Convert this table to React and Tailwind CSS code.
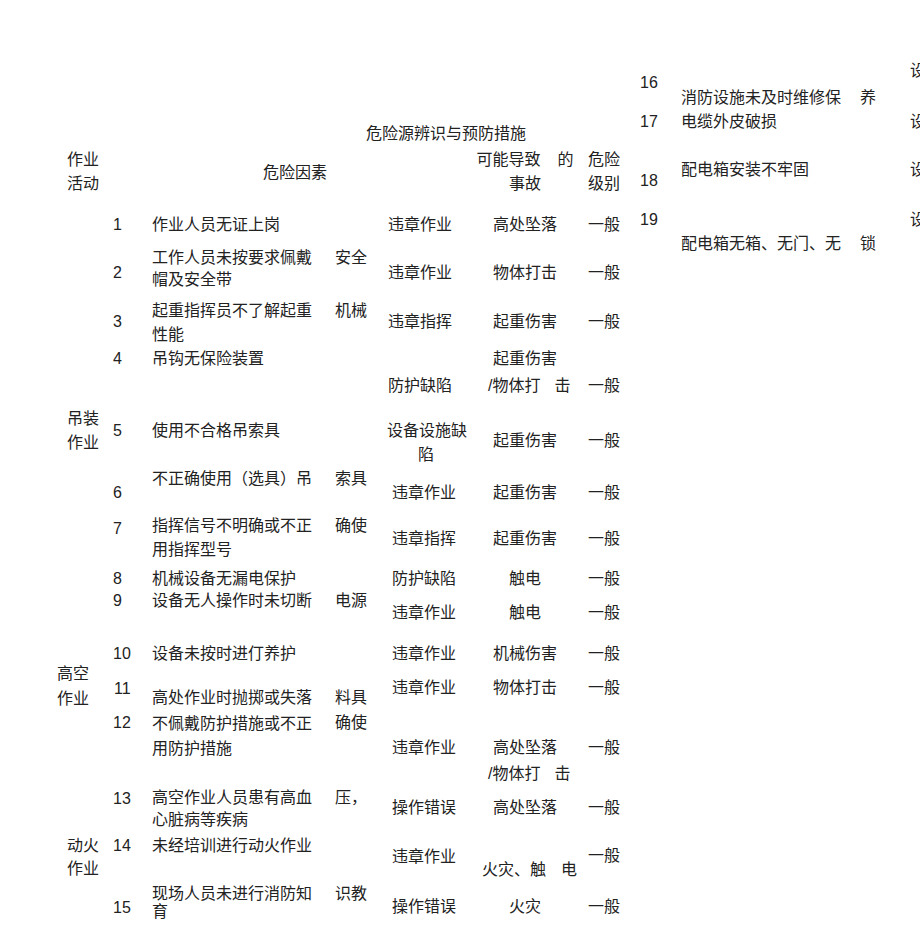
import React from "react";

const Sp = ({ w }) => <span className={`inline-block ${w}`} />;

const App = () => {
  return (
    <div className="w-[920px] h-[949px] overflow-hidden bg-white text-[#222] text-[16px] leading-[24px] font-['Liberation_Sans','Noto_Sans_CJK_SC',sans-serif] flex">
      {/* left page: main table */}
      <div className="w-[640px] shrink-0 pt-[122px]">
        <div className="h-[26px] pl-[366px] whitespace-nowrap">危险源辨识与预防措施</div>

        {/* header */}
        <div className="flex h-[65px]">
          <div className="w-[110px] shrink-0 pl-[67px]"><div>作业</div><div>活动</div></div>
          <div className="w-[42px] shrink-0" />
          <div className="w-[313px] shrink-0 pl-[111px] pt-[13px]">危险因素</div>
          <div className="w-[120px] shrink-0 text-center">
            <div className="whitespace-nowrap">可能导致<Sp w="w-[17px]" />的</div>
            <div>事故</div>
          </div>
          <div className="w-[38px] shrink-0 text-center"><div>危险</div><div>级别</div></div>
        </div>

        {/* 1 */}
        <div className="flex h-[34px]">
          <div className="w-[110px] shrink-0" />
          <div className="w-[42px] shrink-0 pl-[3px]">1</div>
          <div className="w-[183px] shrink-0">作业人员无证上岗</div>
          <div className="w-[40px] shrink-0" />
          <div className="w-[90px] shrink-0 text-center">违章作业</div>
          <div className="w-[120px] shrink-0 text-center">高处坠落</div>
          <div className="w-[38px] shrink-0 text-center">一般</div>
        </div>

        {/* 2 */}
        <div className="flex h-[52px]">
          <div className="w-[110px] shrink-0" />
          <div className="w-[42px] shrink-0 pl-[3px] pt-[14px]">2</div>
          <div className="w-[183px] shrink-0 leading-[22px]"><div>工作人员未按要求佩戴</div><div>帽及安全带</div></div>
          <div className="w-[40px] shrink-0 leading-[22px]">安全</div>
          <div className="w-[90px] shrink-0 text-center pt-[14px]">违章作业</div>
          <div className="w-[120px] shrink-0 text-center pt-[14px]">物体打击</div>
          <div className="w-[38px] shrink-0 text-center pt-[14px]">一般</div>
        </div>

        {/* 3 */}
        <div className="flex h-[48px]">
          <div className="w-[110px] shrink-0" />
          <div className="w-[42px] shrink-0 pl-[3px] pt-[11px]">3</div>
          <div className="w-[183px] shrink-0"><div>起重指挥员不了解起重</div><div>性能</div></div>
          <div className="w-[40px] shrink-0">机械</div>
          <div className="w-[90px] shrink-0 text-center pt-[11px]">违章指挥</div>
          <div className="w-[120px] shrink-0 text-center pt-[11px]">起重伤害</div>
          <div className="w-[38px] shrink-0 text-center pt-[11px]">一般</div>
        </div>

        {/* 4 */}
        <div className="flex h-[60px]">
          <div className="w-[110px] shrink-0" />
          <div className="w-[42px] shrink-0 pl-[3px]">4</div>
          <div className="w-[183px] shrink-0">吊钩无保险装置</div>
          <div className="w-[40px] shrink-0" />
          <div className="w-[90px] shrink-0 text-center pt-[27px]">防护缺陷</div>
          <div className="w-[120px] shrink-0">
            <div className="text-center">起重伤害</div>
            <div className="mt-[3px] pl-[23px] whitespace-nowrap">/物体打<Sp w="w-[14px]" />击</div>
          </div>
          <div className="w-[38px] shrink-0 text-center pt-[27px]">一般</div>
        </div>

        {/* 5 */}
        <div className="flex h-[60px]">
          <div className="w-[110px] shrink-0 pl-[67px]"><div>吊装</div><div>作业</div></div>
          <div className="w-[42px] shrink-0 pl-[3px] pt-[12px]">5</div>
          <div className="w-[183px] shrink-0 pt-[12px]">使用不合格吊索具</div>
          <div className="w-[40px] shrink-0" />
          <div className="w-[90px] shrink-0 text-center pt-[12px] pl-[12px] whitespace-nowrap"><div>设备设施缺</div><div>陷</div></div>
          <div className="w-[120px] shrink-0 text-center pt-[22px]">起重伤害</div>
          <div className="w-[38px] shrink-0 text-center pt-[22px]">一般</div>
        </div>

        {/* 6 */}
        <div className="flex h-[47px]">
          <div className="w-[110px] shrink-0" />
          <div className="w-[42px] shrink-0 pl-[3px] pt-[14px]">6</div>
          <div className="w-[183px] shrink-0 whitespace-nowrap">不正确使用（选具）吊</div>
          <div className="w-[40px] shrink-0">索具</div>
          <div className="w-[90px] shrink-0 text-center pt-[14px] pl-[8px]">违章作业</div>
          <div className="w-[120px] shrink-0 text-center pt-[14px]">起重伤害</div>
          <div className="w-[38px] shrink-0 text-center pt-[14px]">一般</div>
        </div>

        {/* 7 */}
        <div className="flex h-[53px]">
          <div className="w-[110px] shrink-0" />
          <div className="w-[42px] shrink-0 pl-[3px] pt-[3px]">7</div>
          <div className="w-[183px] shrink-0"><div>指挥信号不明确或不正</div><div>用指挥型号</div></div>
          <div className="w-[40px] shrink-0">确使</div>
          <div className="w-[90px] shrink-0 text-center pt-[13px] pl-[8px]">违章指挥</div>
          <div className="w-[120px] shrink-0 text-center pt-[13px]">起重伤害</div>
          <div className="w-[38px] shrink-0 text-center pt-[13px]">一般</div>
        </div>

        {/* 8 */}
        <div className="flex h-[22px]">
          <div className="w-[110px] shrink-0" />
          <div className="w-[42px] shrink-0 pl-[3px]">8</div>
          <div className="w-[183px] shrink-0">机械设备无漏电保护</div>
          <div className="w-[40px] shrink-0" />
          <div className="w-[90px] shrink-0 text-center pl-[8px]">防护缺陷</div>
          <div className="w-[120px] shrink-0 text-center">触电</div>
          <div className="w-[38px] shrink-0 text-center">一般</div>
        </div>

        {/* 9 */}
        <div className="flex h-[53px]">
          <div className="w-[110px] shrink-0" />
          <div className="w-[42px] shrink-0 pl-[3px]">9</div>
          <div className="w-[183px] shrink-0">设备无人操作时未切断</div>
          <div className="w-[40px] shrink-0">电源</div>
          <div className="w-[90px] shrink-0 text-center pt-[12px] pl-[8px]">违章作业</div>
          <div className="w-[120px] shrink-0 text-center pt-[12px]">触电</div>
          <div className="w-[38px] shrink-0 text-center pt-[12px]">一般</div>
        </div>

        {/* 10 */}
        <div className="flex h-[34px]">
          <div className="w-[110px] shrink-0 pl-[57px] pt-[19px] leading-[25px]"><div>高空</div><div>作业</div></div>
          <div className="w-[42px] shrink-0 pl-[3px]">10</div>
          <div className="w-[183px] shrink-0">设备未按时进仃养护</div>
          <div className="w-[40px] shrink-0" />
          <div className="w-[90px] shrink-0 text-center pl-[8px]">违章作业</div>
          <div className="w-[120px] shrink-0 text-center">机械伤害</div>
          <div className="w-[38px] shrink-0 text-center">一般</div>
        </div>

        {/* 11 */}
        <div className="flex h-[35px]">
          <div className="w-[110px] shrink-0" />
          <div className="w-[42px] shrink-0 pl-[4px] pt-[1px]">11</div>
          <div className="w-[183px] shrink-0 pt-[10px]">高处作业时抛掷或失落</div>
          <div className="w-[40px] shrink-0 pt-[10px]">料具</div>
          <div className="w-[90px] shrink-0 text-center pl-[8px]">违章作业</div>
          <div className="w-[120px] shrink-0 text-center">物体打击</div>
          <div className="w-[38px] shrink-0 text-center">一般</div>
        </div>

        {/* 12 */}
        <div className="flex h-[76px]">
          <div className="w-[110px] shrink-0" />
          <div className="w-[42px] shrink-0 pl-[3px]">12</div>
          <div className="w-[183px] shrink-0 leading-[25px]"><div>不佩戴防护措施或不正</div><div>用防护措施</div></div>
          <div className="w-[40px] shrink-0">确使</div>
          <div className="w-[90px] shrink-0 text-center pt-[25px] pl-[8px]">违章作业</div>
          <div className="w-[120px] shrink-0 pt-[25px]">
            <div className="text-center">高处坠落</div>
            <div className="mt-[2px] pl-[23px] whitespace-nowrap">/物体打<Sp w="w-[14px]" />击</div>
          </div>
          <div className="w-[38px] shrink-0 text-center pt-[25px]">一般</div>
        </div>

        {/* 13 */}
        <div className="flex h-[47px]">
          <div className="w-[110px] shrink-0" />
          <div className="w-[42px] shrink-0 pl-[3px]">13</div>
          <div className="w-[183px] shrink-0 leading-[22px]"><div>高空作业人员患有高血</div><div>心脏病等疾病</div></div>
          <div className="w-[40px] shrink-0 leading-[22px]">压，</div>
          <div className="w-[90px] shrink-0 text-center pt-[9px] pl-[8px]">操作错误</div>
          <div className="w-[120px] shrink-0 text-center pt-[9px]">高处坠落</div>
          <div className="w-[38px] shrink-0 text-center pt-[9px]">一般</div>
        </div>

        {/* 14 */}
        <div className="flex h-[48px]">
          <div className="w-[110px] shrink-0 pl-[67px] leading-[23px]"><div>动火</div><div>作业</div></div>
          <div className="w-[42px] shrink-0 pl-[3px]">14</div>
          <div className="w-[183px] shrink-0">未经培训进行动火作业</div>
          <div className="w-[40px] shrink-0" />
          <div className="w-[90px] shrink-0 text-center pt-[11px] pl-[8px]">违章作业</div>
          <div className="w-[120px] shrink-0 pt-[24px] pl-[17px] whitespace-nowrap">火灾、触<Sp w="w-[15px]" />电</div>
          <div className="w-[38px] shrink-0 text-center pt-[10px]">一般</div>
        </div>

        {/* 15 */}
        <div className="flex h-[48px]">
          <div className="w-[110px] shrink-0" />
          <div className="w-[42px] shrink-0 pl-[3px] pt-[14px]">15</div>
          <div className="w-[183px] shrink-0"><div>现场人员未进行消防知</div><div className="leading-[12px]">育</div></div>
          <div className="w-[40px] shrink-0">识教</div>
          <div className="w-[90px] shrink-0 text-center pt-[13px] pl-[8px]">操作错误</div>
          <div className="w-[120px] shrink-0 text-center pt-[13px]">火灾</div>
          <div className="w-[38px] shrink-0 text-center pt-[13px]">一般</div>
        </div>
      </div>

      {/* right page: continued rows */}
      <div className="flex-1 pt-[59px]">
        <div className="flex h-[51px]">
          <div className="w-[41px] shrink-0 pt-[12px]">16</div>
          <div className="w-[229px] shrink-0 pt-[27px] whitespace-nowrap">消防设施未及时维修保<Sp w="w-[19px]" />养</div>
          <div className="shrink-0">设</div>
        </div>
        <div className="flex h-[48px]">
          <div className="w-[41px] shrink-0">17</div>
          <div className="w-[229px] shrink-0">电缆外皮破损</div>
          <div className="shrink-0">设</div>
        </div>
        <div className="flex h-[50px]">
          <div className="w-[41px] shrink-0 pt-[11px]">18</div>
          <div className="w-[229px] shrink-0">配电箱安装不牢固</div>
          <div className="shrink-0">设</div>
        </div>
        <div className="flex h-[50px]">
          <div className="w-[41px] shrink-0">19</div>
          <div className="w-[229px] shrink-0 pt-[24px] whitespace-nowrap">配电箱无箱、无门、无<Sp w="w-[19px]" />锁</div>
          <div className="shrink-0">设</div>
        </div>
      </div>
    </div>
  );
};

export default App;
